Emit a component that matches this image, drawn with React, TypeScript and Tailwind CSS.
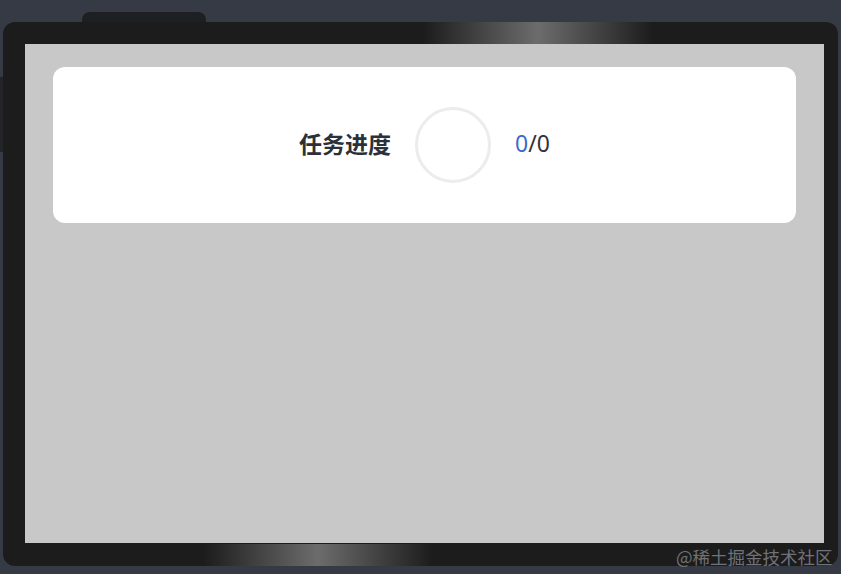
export default function App() {
  return (
    <div className="relative h-[574px] w-[841px] overflow-hidden bg-[#353a44] pl-[3px] pt-[22px]" style={{ fontFamily: '"Noto Sans", "Noto Sans CJK SC", sans-serif' }}>
      {/* top power button */}
      <div className="absolute left-[82px] top-[12px] h-[12px] w-[124px] rounded-t-[8px] bg-[#1e1f22]" />
      {/* left side button */}
      <div className="absolute left-0 top-[77px] h-[75px] w-[4px] bg-[#232427]" />
      <div className="relative h-[544px] w-[835px] rounded-[12px] bg-[#1c1c1d] p-[22px]">
        {/* glare top */}
        <div className="absolute left-[420px] top-0 h-[22px] w-[230px] bg-linear-to-r from-transparent via-[#6c6c6c] to-transparent" />
        {/* glare bottom */}
        <div className="absolute bottom-0 left-[200px] h-[22px] w-[230px] bg-linear-to-r from-transparent via-[#6c6c6c] to-transparent" />
        <div className="h-[499px] w-[799px] bg-[#c8c8c8] px-[28px] pt-[23px]">
          <div className="flex h-[156px] w-[743px] items-center justify-center gap-[24px] rounded-[12px] bg-white">
            <span className="mb-[4px] text-[23px] leading-none font-bold text-[#2c3038]" style={{ fontFamily: '"Noto Sans CJK SC", sans-serif' }}>任务进度</span>
            <div className="h-[76px] w-[76px] rounded-full border-[3px] border-[#ececec]" />
            <span className="mb-[3px] text-[23px] leading-none text-[#333]"><span className="text-[#3a6bc9]">0</span>/0</span>
          </div>
        </div>
      </div>
      <div className="absolute left-[676px] top-[544px] text-[17.5px] text-[#707277]" style={{ fontFamily: '"Noto Sans CJK SC", sans-serif' }}>@稀土掘金技术社区</div>
    </div>
  );
}
